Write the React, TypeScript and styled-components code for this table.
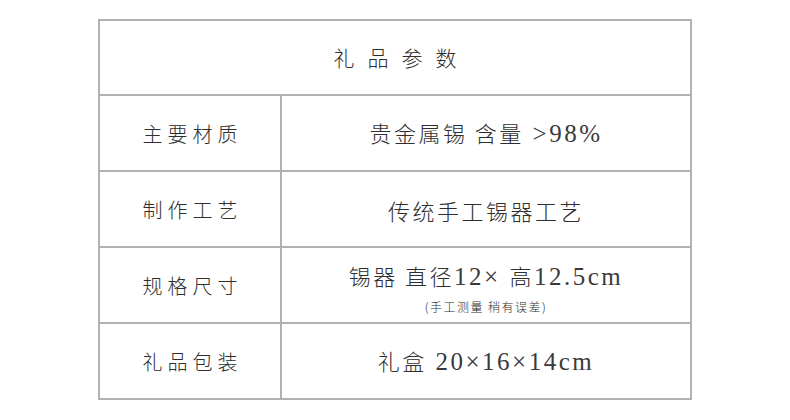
import { Fragment } from 'react';
import styled, { createGlobalStyle } from 'styled-components';

const GlobalStyle = createGlobalStyle`
  body {
    margin: 0;
    background: #fff;
  }
`;

const Page = styled.div`
  padding: 19px 0 0 98px;
  font-family: 'Noto Sans CJK SC', sans-serif;
  color: #2e2e2e;
`;

const Table = styled.div`
  width: 594px;
  box-sizing: border-box;
  display: grid;
  grid-template-columns: 180px 408px;
  grid-template-rows: 73px repeat(4, 74px);
  gap: 2px;
  padding: 2px;
  background: #b1b1b1;
`;

const Cell = styled.div<{ $span?: boolean }>`
  background: #fff;
  display: flex;
  flex-direction: column;
  align-items: center;
  justify-content: center;
  grid-column: ${(p) => (p.$span ? '1 / 3' : 'auto')};
`;

const Title = styled.div`
  font-size: 21px;
  font-weight: 300;
  letter-spacing: 13px;
  padding-left: 13px;
  line-height: 1;
`;

const Label = styled.div`
  font-size: 20px;
  font-weight: 300;
  letter-spacing: 5px;
  padding-left: 5px;
  line-height: 1;
  margin-top: 1px;
`;

const Value = styled.div<{ $withNote?: boolean }>`
  font-size: 22px;
  font-weight: 300;
  letter-spacing: 2.5px;
  line-height: 1;
  margin-top: ${(p) => (p.$withNote ? '6px' : '1px')};
  white-space: pre;
`;

// latin part (digits, ×, cm) set in a Times-like serif
const Num = styled.span`
  font-family: 'Liberation Serif', serif;
  font-weight: 400;
  font-size: 25px;
  letter-spacing: 2.5px;
  color: #3a3a3a;
`;

const Note = styled.div`
  font-size: 12px;
  font-weight: 300;
  letter-spacing: 1.5px;
  line-height: 1;
  margin-top: 12px;
`;

const rows = [
  { label: '主要材质', value: '贵金属锡 含量 >98%' },
  { label: '制作工艺', value: '传统手工锡器工艺' },
  { label: '规格尺寸', value: '锡器 直径12× 高12.5cm', note: '(手工测量 稍有误差)' },
  { label: '礼品包装', value: '礼盒 20×16×14cm' },
];

const renderValue = (text: string) =>
  text.split(/([0-9.×>%cm ]+)/).map((part, i) =>
    /[0-9.×>%cm]/.test(part) ? <Num key={i}>{part}</Num> : <Fragment key={i}>{part}</Fragment>
  );

const App = () => {
  return (
    <Page>
      <GlobalStyle />
      <Table>
        <Cell $span>
          <Title>礼品参数</Title>
        </Cell>
        {rows.map((r) => (
          <Fragment key={r.label}>
            <Cell>
              <Label>{r.label}</Label>
            </Cell>
            <Cell>
              <Value $withNote={!!r.note}>{renderValue(r.value)}</Value>
              {r.note && <Note>{r.note}</Note>}
            </Cell>
          </Fragment>
        ))}
      </Table>
    </Page>
  );
};

export default App;
